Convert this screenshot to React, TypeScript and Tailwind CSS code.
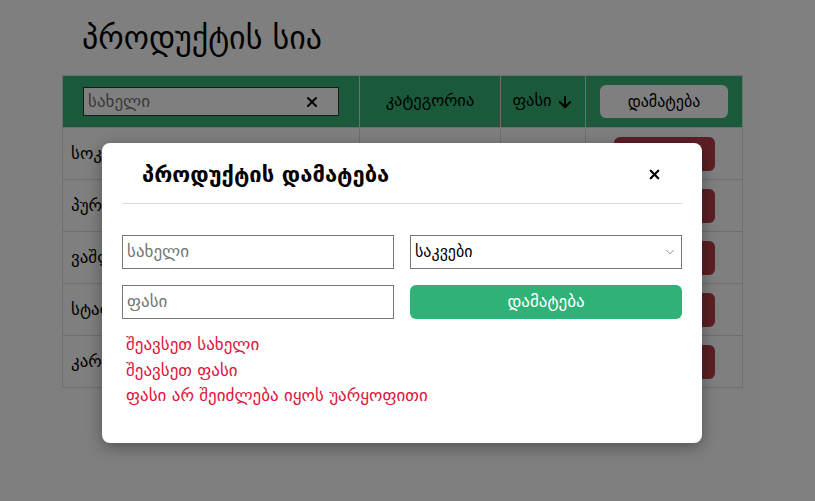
import { ArrowDown, ChevronDown, X } from "lucide-react"

const products = ["სოკო", "პური", "ვაშლი", "სტაფილო", "კარტოფილი"]

const errors = ["შეავსეთ სახელი", "შეავსეთ ფასი", "ფასი არ შეიძლება იყოს უარყოფითი"]

export default function App() {
  return (
    <div className="relative h-[501px] w-[815px] overflow-hidden bg-white font-['DejaVu_Sans',sans-serif] text-black">
      <div className="pl-[62px] pt-[18px]">
        <h1 className="pl-5 text-[32px] leading-[40px]">პროდუქტის სია</h1>

        <table className="mt-[17px] border-collapse text-base">
          <thead>
            <tr className="h-[52px] bg-[#34b474]">
              <th className="w-[296px] border border-[#dddddd] px-5 text-left font-normal">
                <div className="flex h-[29px] w-[256px] items-center justify-between border border-[#333333] bg-white pl-1 pr-[18px]">
                  <span className="text-[17px] text-[#757575]">სახელი</span>
                  <X className="h-4 w-4" strokeWidth={3} aria-hidden="true" />
                </div>
              </th>
              <th className="w-[141px] border border-[#dddddd] text-[16.5px] font-normal">კატეგორია</th>
              <th className="w-[85px] border border-[#dddddd] text-[16.5px] font-normal">
                <span className="inline-flex items-center gap-1">
                  ფასი
                  <ArrowDown className="h-[18px] w-[18px]" strokeWidth={2.5} aria-hidden="true" />
                </span>
              </th>
              <th className="w-[157px] border border-[#dddddd] font-normal">
                <button className="h-[33px] w-[128px] rounded-md bg-white text-[16px]">დამატება</button>
              </th>
            </tr>
          </thead>
          <tbody>
            {products.map((name) => (
              <tr key={name} className="h-[52px]">
                <td className="border border-[#dddddd] pl-2 text-[17px]">{name}</td>
                <td className="border border-[#dddddd]" />
                <td className="border border-[#dddddd]" />
                <td className="border border-[#dddddd] pl-[28px]">
                  <button className="block h-[34px] w-[101px] rounded-md bg-[#b83e4b]" aria-label="წაშლა" />
                </td>
              </tr>
            ))}
          </tbody>
        </table>
      </div>

      <div className="absolute inset-0 bg-black/50">
        <div className="absolute left-[102px] top-[143px] h-[300px] w-[600px] rounded-lg bg-white px-5 shadow-[0_4px_16px_rgba(0,0,0,0.35)]">
          <div className="flex h-[61px] items-center justify-between border-b border-[#dddddd] pl-5 pr-[20px] pt-[2px]">
            <h2 className="text-[22px] font-bold">პროდუქტის დამატება</h2>
            <X className="h-[15px] w-[15px]" strokeWidth={3.5} aria-hidden="true" />
          </div>

          <div className="mt-[31px] grid grid-cols-2 gap-4">
            <div className="flex h-[34px] items-center border border-[#767676] px-1 text-[17px] text-[#757575]">სახელი</div>
            <div className="flex h-[34px] items-center justify-between border border-[#767676] bg-white pl-1 pr-1">
              <span>საკვები</span>
              <ChevronDown className="h-3.5 w-3.5 text-[#808080]" strokeWidth={1.5} aria-hidden="true" />
            </div>
            <div className="flex h-[34px] items-center border border-[#767676] px-1 text-[17px] text-[#757575]">ფასი</div>
            <button className="h-[34px] rounded-md bg-[#2fb277] text-[17px] text-white">დამატება</button>
          </div>

          <div className="mt-[13px] pl-1">
            {errors.map((e) => (
              <div key={e} className="text-[17px] leading-[25.5px] text-[#dc143c]">
                {e}
              </div>
            ))}
          </div>
        </div>
      </div>
    </div>
  )
}
